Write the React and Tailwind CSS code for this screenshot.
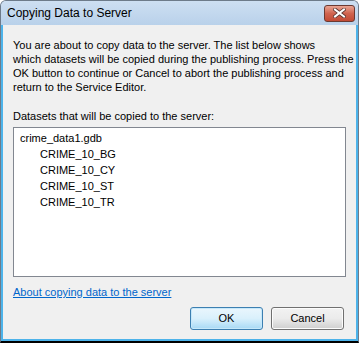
import React from 'react';

const datasets = ['CRIME_10_BG', 'CRIME_10_CY', 'CRIME_10_ST', 'CRIME_10_TR'];

const intro = [
  'You are about to copy data to the server. The list below shows',
  'which datasets will be copied during the publishing process. Press the',
  'OK button to continue or Cancel to abort the publishing process and',
  'return to the Service Editor.',
];

function CloseButton() {
  return (
    <div className="w-[31px] h-[17px] rounded-[3px] border border-[#6b3a32] bg-gradient-to-b from-[#e8a493] via-[#d0644f] to-[#c24a34] flex items-center justify-center">
      <svg width="13" height="10" viewBox="0 0 13 10">
        <path d="M2 1.5 L11 8.5 M11 1.5 L2 8.5" stroke="#5a3530" strokeWidth="3.6" strokeLinecap="square" />
        <path d="M2 1.5 L11 8.5 M11 1.5 L2 8.5" stroke="#ffffff" strokeWidth="2" strokeLinecap="square" />
      </svg>
    </div>
  );
}

function Button({ children, focused }) {
  return (
    <button
      className={
        'w-[73px] h-[23px] rounded-[3px] border text-[11px] text-black ' +
        (focused
          ? 'border-[#3c7fb1] bg-gradient-to-b from-[#eaf6fd] via-[#d9f0fc] to-[#a7d9f5] shadow-[inset_0_0_0_1px_#c6e8fa]'
          : 'border-[#707070] bg-gradient-to-b from-[#f2f2f2] via-[#ebebeb] to-[#cfcfcf] shadow-[inset_0_0_0_1px_#fcfcfc]')
      }
    >
      {children}
    </button>
  );
}

export default function App() {
  return (
    <div className="w-[359px] h-[343px] font-['Liberation_Sans',Arial,sans-serif] text-[11px] text-black">
      <div className="w-full h-full flex flex-col bg-[#bfd4eb] border border-[#6d7b8a] border-b-2 border-b-black rounded-t-[6px] overflow-hidden">
        <div className="h-[24px] shrink-0 flex items-center justify-between pl-[6px] pr-[3px] bg-gradient-to-b from-[#cddff2] to-[#b9d1ea]">
          <span className="text-[12px] leading-none">Copying Data to Server</span>
          <CloseButton />
        </div>
        <div className="flex-1 flex flex-col bg-[#f0f0f0] border-x-2 border-b-2 border-[#4db3ea] px-[10px] pt-[13px]">
          <div className="leading-[14px] whitespace-nowrap">
            {intro.map((line) => (
              <div key={line}>{line}</div>
            ))}
          </div>
          <p className="mt-[15px] leading-[14px]">Datasets that will be copied to the server:</p>
          <div className="mt-[4px] h-[150px] shrink-0 bg-white border border-[#828790] pt-[2px] pl-[6px]">
            <div className="leading-[16px]">crime_data1.gdb</div>
            {datasets.map((d) => (
              <div key={d} className="leading-[16px] pl-[20px]">
                {d}
              </div>
            ))}
          </div>
          <a href="#" className="mt-[8px] self-start text-[#0066cc] underline leading-[14px]">
            About copying data to the server
          </a>
          <div className="mt-[8px] flex justify-end gap-[8px] pr-[2px]">
            <Button focused>OK</Button>
            <Button>Cancel</Button>
          </div>
        </div>
      </div>
    </div>
  );
}
